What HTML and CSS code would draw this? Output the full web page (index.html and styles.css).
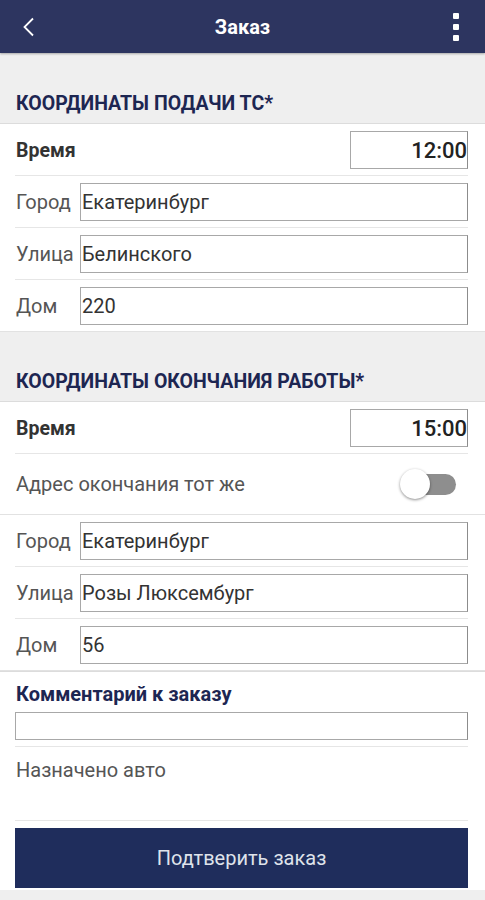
FILE: index.html
```html
<!DOCTYPE html>
<html lang="ru">
<head>
    <meta charset="UTF-8">
    <meta name="viewport" content="width=device-width, initial-scale=1.0">
    <title>Заказ</title>
    <link rel="stylesheet" href="styles.css">
</head>
<body>
    <header class="topbar">
        <button class="topbar-btn back-btn" aria-label="Назад">
            <svg width="14" height="20" viewBox="0 0 14 20"><path d="M11 1.5 L2.5 10 L11 18.5" fill="none" stroke="#ffffff" stroke-width="1.8"/></svg>
        </button>
        <h1 class="topbar-title">Заказ</h1>
        <button class="topbar-btn menu-btn" aria-label="Меню">
            <span class="dot"></span><span class="dot"></span><span class="dot"></span>
        </button>
    </header>

    <!-- Подача -->
    <section class="group">
        <h2 class="group-title">КООРДИНАТЫ ПОДАЧИ ТС*</h2>
        <div class="group-body">
            <div class="row">
                <span class="label label-bold">Время</span>
                <input class="time-input" type="text" value="12:00">
            </div>
            <div class="row">
                <span class="label">Город</span>
                <input class="text-input" type="text" value="Екатеринбург">
            </div>
            <div class="row">
                <span class="label">Улица</span>
                <input class="text-input" type="text" value="Белинского">
            </div>
            <div class="row row-last">
                <span class="label">Дом</span>
                <input class="text-input" type="text" value="220">
            </div>
        </div>
    </section>

    <!-- Окончание -->
    <section class="group">
        <h2 class="group-title">КООРДИНАТЫ ОКОНЧАНИЯ РАБОТЫ*</h2>
        <div class="group-body">
            <div class="row">
                <span class="label label-bold">Время</span>
                <input class="time-input" type="text" value="15:00">
            </div>
            <div class="row row-last row-switch">
                <span class="label">Адрес окончания тот же</span>
                <label class="switch">
                    <input type="checkbox">
                    <span class="switch-track"></span>
                    <span class="switch-thumb"></span>
                </label>
            </div>
        </div>
        <div class="group-body">
            <div class="row">
                <span class="label">Город</span>
                <input class="text-input" type="text" value="Екатеринбург">
            </div>
            <div class="row">
                <span class="label">Улица</span>
                <input class="text-input" type="text" value="Розы Люксембург">
            </div>
            <div class="row row-last">
                <span class="label">Дом</span>
                <input class="text-input" type="text" value="56">
            </div>
        </div>
    </section>

    <section class="comment">
        <h3 class="comment-title">Комментарий к заказу</h3>
        <div class="row row-comment">
            <input class="comment-input" type="text">
        </div>
        <div class="row row-auto">
            <span class="label">Назначено авто</span>
        </div>
        <button class="confirm-button">Подтверить заказ</button>
    </section>
</body>
</html>
```

FILE: styles.css
```css
body, html {
    margin: 0;
    padding: 0;
    background: #efefef;
    font-family: Roboto, "Noto Sans", sans-serif;
}

.topbar {
    height: 53px;
    background-color: #2d3560;
    display: flex;
    align-items: center;
    justify-content: space-between;
    padding: 0 16px;
    box-shadow: 0 1px 2px rgba(0, 0, 0, 0.3);
}

.topbar-btn {
    border: none;
    background: none;
    padding: 0;
    cursor: pointer;
}

.back-btn {
    width: 30px;
    display: flex;
    align-items: center;
    padding-left: 6px;
}

.topbar-title {
    margin: 0;
    color: #ffffff;
    font-size: 20px;
    font-weight: 700;
}

.menu-btn {
    width: 30px;
    display: flex;
    flex-direction: column;
    align-items: flex-end;
    gap: 5px;
    padding-right: 10px;
}

.dot {
    width: 6px;
    height: 6px;
    background: #ffffff;
    border-radius: 1px;
}

.group-title {
    margin: 0;
    padding: 39px 16px 8px;
    line-height: 22px;
    font-size: 19.5px;
    font-weight: 700;
    color: #1d2652;
    border-bottom: 1px solid #dcdcdc;
}

.group:first-of-type .group-title {
    padding-top: 40px;
}

.group-body {
    background: #ffffff;
    padding: 0 17px 0 15px;
    border-bottom: 1px solid #e2e2e2;
}

.row {
    display: flex;
    align-items: center;
    padding: 7px 0 6px;
    border-bottom: 1px solid #e6e6e6;
}

.row-last {
    border-bottom: none;
}

.label {
    width: 64px;
    padding-left: 1px;
    flex-shrink: 0;
    font-size: 20px;
    color: #555555;
    white-space: nowrap;
}

.label-bold {
    font-weight: 700;
    font-size: 19.5px;
    color: #333333;
    flex: 1;
}

.text-input,
.time-input,
.comment-input {
    box-sizing: border-box;
    height: 38px;
    border: 1px solid #a8a8a8;
    border-right-color: #8c8c8c;
    background: #ffffff;
    font-family: inherit;
    font-size: 20px;
    color: #333333;
    outline: none;
    margin: 0;
}

.text-input {
    flex: 1;
    min-width: 0;
    padding: 0 1px;
}

.time-input {
    width: 118px;
    text-align: right;
    padding: 0;
    font-weight: 500;
    font-size: 22px;
    color: #222222;
}

.row-switch {
    height: 60px;
    box-sizing: border-box;
    padding: 0;
    justify-content: space-between;
}

.row-switch .label {
    width: auto;
}

.switch {
    position: relative;
    width: 60px;
    height: 32px;
    margin-right: 8px;
    cursor: pointer;
}

.switch input {
    display: none;
}

.switch-track {
    position: absolute;
    left: 14px;
    top: 6px;
    width: 42px;
    height: 21px;
    border-radius: 11px;
    background: #8e8e8e;
}

.switch-thumb {
    position: absolute;
    left: 0;
    top: 1px;
    width: 30px;
    height: 30px;
    border-radius: 50%;
    background: #ffffff;
    box-shadow: 0 1px 3px rgba(0, 0, 0, 0.45);
}

.comment {
    background: #ffffff;
    padding: 11px 17px 2px 15px;
    border-top: 1px solid #dcdcdc;
}

.comment-title {
    margin: 0;
    line-height: 22px;
    font-size: 20px;
    font-weight: 700;
    color: #1d2652;
    padding-left: 1px;
}

.row-comment {
    padding: 7px 0 6px;
}

.comment-input {
    flex: 1;
    height: 28px;
}

.row-auto {
    height: 74px;
    box-sizing: border-box;
    align-items: flex-start;
    padding: 12px 0 0;
}

.row-auto .label {
    width: auto;
    line-height: 22px;
}

.confirm-button {
    display: block;
    width: 100%;
    height: 60px;
    margin: 7px 0 0;
    border: none;
    background-color: #1f2d5c;
    color: #dfe3eb;
    font-family: inherit;
    font-size: 20px;
    cursor: pointer;
}
```
